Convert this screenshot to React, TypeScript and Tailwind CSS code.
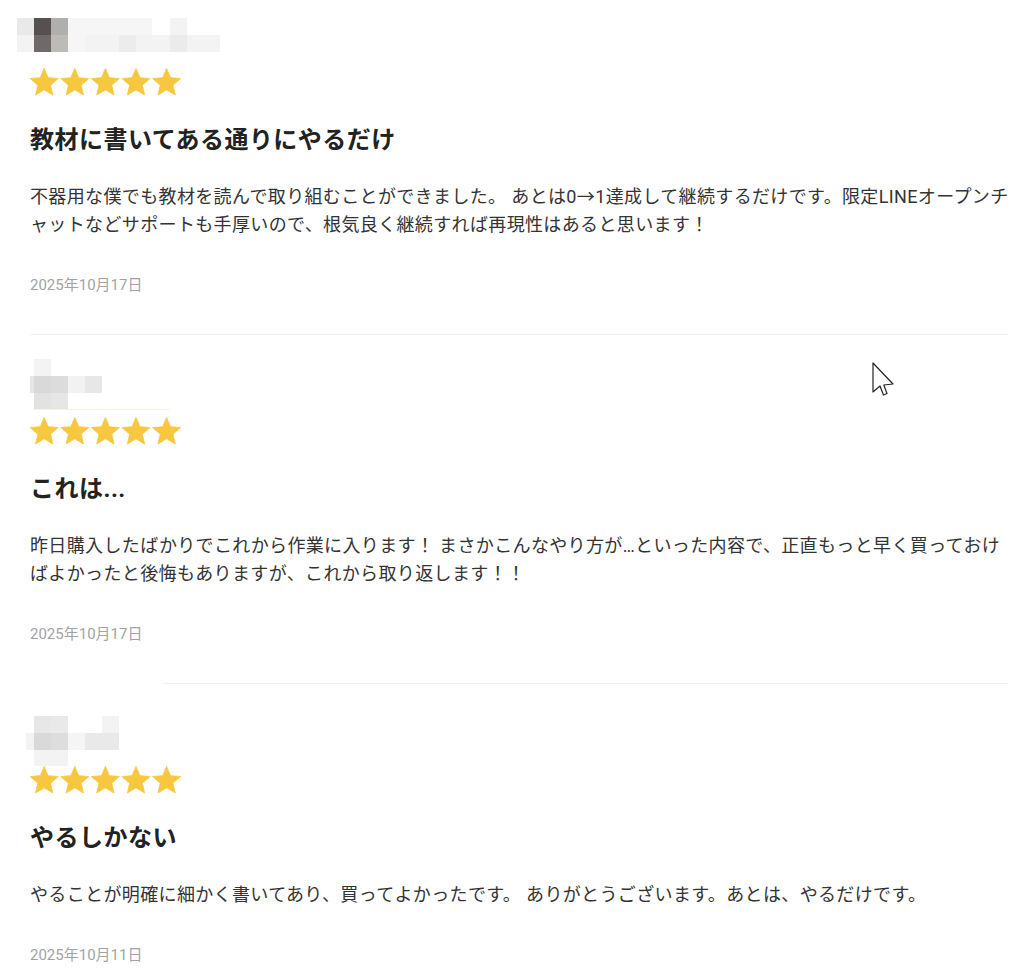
type Cell = [number, number, number, number, string];

type Review = {
  mosaic: Cell[];
  title: string;
  body: string;
  date: string;
};

const reviews: Review[] = [
  {
    mosaic: [
      [17, 8, 17, 17, "#e9e9e9"],
      [34, 8, 17, 17, "#565150"],
      [51, 8, 17, 17, "#b1aeae"],
      [68, 8, 84, 17, "#f6f6f6"],
      [170, 8, 17, 17, "#f3f3f3"],
      [17, 25, 17, 17, "#f3f3f3"],
      [34, 25, 17, 17, "#6f6a69"],
      [51, 25, 17, 17, "#bcbbb8"],
      [68, 25, 17, 17, "#f6f6f6"],
      [85, 25, 34, 17, "#f3f3f3"],
      [119, 25, 17, 17, "#ececec"],
      [136, 25, 34, 17, "#f3f3f3"],
      [170, 25, 17, 17, "#ebebeb"],
      [187, 25, 33, 17, "#f3f3f3"],
    ],
    title: "教材に書いてある通りにやるだけ",
    body: "不器用な僕でも教材を読んで取り組むことができました。 あとは0→1達成して継続するだけです。限定LINEオープンチャットなどサポートも手厚いので、根気良く継続すれば再現性はあると思います！",
    date: "2025年10月17日",
  },
  {
    mosaic: [
      [34, 0, 17, 17, "#f3f3f3"],
      [30, 17, 4, 17, "#e6e6e6"],
      [34, 17, 17, 17, "#d9d9d9"],
      [51, 17, 17, 17, "#dcdcdc"],
      [68, 17, 17, 17, "#f2f2f2"],
      [85, 17, 17, 17, "#e7e7e7"],
      [34, 34, 17, 16, "#e2e2e2"],
      [51, 34, 17, 16, "#e6e6e6"],
      [34, 50, 136, 1, "#fcf1dc"],
    ],
    title: "これは...",
    body: "昨日購入したばかりでこれから作業に入ります！ まさかこんなやり方が…といった内容で、正直もっと早く買っておけばよかったと後悔もありますが、これから取り返します！！",
    date: "2025年10月17日",
  },
  {
    mosaic: [
      [34, 8, 17, 17, "#e7e7e7"],
      [51, 8, 17, 17, "#e9e9e9"],
      [102, 8, 17, 17, "#f3f3f3"],
      [26, 25, 8, 17, "#f3f3f3"],
      [34, 25, 17, 17, "#d9d9d9"],
      [51, 25, 17, 17, "#dddddd"],
      [68, 25, 17, 17, "#f5f5f5"],
      [85, 25, 34, 17, "#e9e9e9"],
      [34, 42, 34, 16, "#f3f3f3"],
    ],
    title: "やるしかない",
    body: "やることが明確に細かく書いてあり、買ってよかったです。 ありがとうございます。あとは、やるだけです。",
    date: "2025年10月11日",
  },
];

const STAR = "M12 17.27L18.18 21l-1.64-7.03L22 9.24l-7.19-.61L12 2 9.19 8.63 2 9.24l5.46 4.73L5.82 21z";

function Stars() {
  return (
    <svg width="160" height="28" className="block overflow-visible" aria-label="5 stars">
      {[0, 1, 2, 3, 4].map((i) => (
        <path
          key={i}
          d={STAR}
          transform={`translate(${30.6 * i - 2.6} -2.4) scale(1.4)`}
          fill="#f8c740"
          stroke="#f8c740"
          strokeWidth="0.6"
          strokeLinejoin="round"
        />
      ))}
    </svg>
  );
}

function Mosaic({ cells }: { cells: Cell[] }) {
  return (
    <svg width="240" height="58" className="-ml-[30px] block">
      {cells.map(([x, y, w, h, c], i) => (
        <rect key={i} x={x} y={y} width={w} height={h} fill={c} />
      ))}
    </svg>
  );
}

function Cursor() {
  return (
    <svg width="24" height="36" className="pointer-events-none absolute left-[872px] top-[362px]">
      <path
        d="M1 1 L1 30 L8 24 L11.5 33 L15 31.5 L11.8 23 L21 22 Z"
        fill="#ffffff"
        stroke="#222222"
        strokeWidth="1.2"
        strokeLinejoin="round"
      />
    </svg>
  );
}

export default function App() {
  return (
    <div
      className="relative min-h-[971px] bg-white pl-[30px] pr-[16px] pt-[10px]"
      style={{ fontFamily: 'Roboto, "Noto Sans CJK JP", sans-serif' }}
    >
      {reviews.map((r, idx) => (
        <div key={idx}>
          <Mosaic cells={r.mosaic} />
          <Stars />
          <h2 className="mt-[26px] text-[24px] font-bold leading-[36px] tracking-[0.02em] text-[#222222]">
            {r.title}
          </h2>
          <p className="-mr-[4px] mt-[25px] text-[18px] leading-[28px] tracking-[0.02em] text-[#333333]">
            {r.body}
          </p>
          <p className="mt-[35px] text-[15px] leading-[22px] text-[#a3a3a3]">{r.date}</p>
          {idx < reviews.length - 1 && (
            <div
              className={
                idx === 1
                  ? "mb-[24px] ml-[133px] mt-[38px] h-px bg-[#f0f0f0]"
                  : "mb-[24px] mt-[38px] h-px bg-[#f0f0f0]"
              }
            />
          )}
        </div>
      ))}
      <Cursor />
    </div>
  );
}
